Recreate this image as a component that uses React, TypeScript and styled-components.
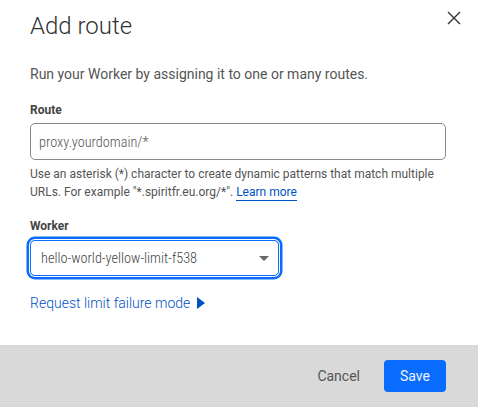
import React from "react";
import styled, { createGlobalStyle } from "styled-components";

const Global = createGlobalStyle`
  html, body { margin: 0; padding: 0; background: #fff; }
  body { font-family: Roboto, "Noto Sans", "Liberation Sans", sans-serif; -webkit-font-smoothing: antialiased; }
  * { box-sizing: border-box; }
`;

const Dialog = styled.div`
  width: 478px;
  height: 407px;
  display: flex;
  flex-direction: column;
  background: #fff;
`;

const Body = styled.div`
  flex: 1;
  display: flex;
  flex-direction: column;
  padding: 12px 30px 0 30px;
  position: relative;
`;

const Title = styled.h1`
  margin: 0;
  font-size: 24px;
  line-height: 28px;
  font-weight: 300;
  color: #333;
`;

const Close = styled.button`
  position: absolute;
  top: 10px;
  right: 16px;
  width: 16px;
  height: 16px;
  padding: 0;
  border: 0;
  background: none;
  display: flex;
  align-items: center;
  justify-content: center;
  cursor: pointer;
`;

const Description = styled.p`
  margin: 24px 0 0 0;
  font-size: 14px;
  line-height: 20px;
  color: #555;
`;

const Label = styled.label<{ $top: number }>`
  display: block;
  margin-top: ${(p) => p.$top}px;
  font-size: 12px;
  line-height: 16px;
  font-weight: 700;
  color: #444;
`;

const FieldValue = styled.div`
  display: flex;
  align-items: center;
  font-family: "Roboto Condensed", Roboto, sans-serif;
  font-size: 14.3px;
  font-weight: 300;
`;

const Input = styled(FieldValue)`
  margin-top: 5px;
  width: 416px;
  height: 37px;
  border: 1px solid #8a8a8a;
  border-radius: 5px;
  padding: 0 8px;
  color: #555;
`;

const Help = styled.p`
  margin: 5px 0 0 0;
  font-size: 12px;
  line-height: 18px;
  color: #555;
`;

const HelpLink = styled.a`
  display: inline-block;
  line-height: 15px;
  color: #0051c3;
  text-decoration: none;
  border-bottom: 1px solid #0051c3;
`;

const Select = styled(FieldValue)`
  margin-top: 6px;
  width: 249px;
  height: 36px;
  border: 1px solid #0a6cff;
  border-radius: 5px;
  box-shadow: 0 0 0 1px #fff, 0 0 0 3.5px #0a6cff;
  justify-content: space-between;
  padding: 0 9px 0 10px;
  color: #444;
`;

const Caret = styled.span`
  width: 0;
  height: 0;
  border-left: 5px solid transparent;
  border-right: 5px solid transparent;
  border-top: 5px solid #666;
`;

const Disclosure = styled.a`
  margin-top: 17px;
  display: flex;
  align-items: center;
  gap: 7px;
  font-size: 14px;
  line-height: 20px;
  font-weight: 300;
  color: #0051c3;
  text-decoration: none;
`;

const Footer = styled.div`
  height: 62px;
  background: #d9d9d9;
  display: flex;
  align-items: center;
  justify-content: flex-end;
  gap: 24px;
  padding: 0 32px 0 0;
`;

const Ghost = styled.button`
  border: 0;
  background: none;
  font-family: inherit;
  font-size: 14px;
  color: #555;
  padding: 0;
  cursor: pointer;
`;

const Primary = styled.button`
  width: 62px;
  height: 32px;
  border: 0;
  border-radius: 4px;
  background: #0a6cff;
  color: #eef3ff;
  font-family: inherit;
  font-size: 14px;
  cursor: pointer;
`;

export default function App() {
  return (
    <>
      <Global />
      <Dialog>
        <Body>
          <Title>Add route</Title>
          <Close aria-label="Close">
            <svg width="14" height="14" viewBox="0 0 14 14">
              <path d="M1 1 L13 13 M13 1 L1 13" stroke="#333" strokeWidth="1.4" />
            </svg>
          </Close>
          <Description>Run your Worker by assigning it to one or many routes.</Description>
          <Label $top={18}>Route</Label>
          <Input>proxy.yourdomain/*</Input>
          <Help>
            Use an asterisk (*) character to create dynamic patterns that match multiple URLs. For example
            "*.spiritfr.eu.org/*". <HelpLink href="#">Learn more</HelpLink>
          </Help>
          <Label $top={17}>Worker</Label>
          <Select>
            <span>hello-world-yellow-limit-f538</span>
            <Caret />
          </Select>
          <Disclosure href="#">
            Request limit failure mode
            <svg width="8" height="12" viewBox="0 0 8 12">
              <path d="M0 0 L8 6 L0 12 Z" fill="#0051c3" />
            </svg>
          </Disclosure>
        </Body>
        <Footer>
          <Ghost>Cancel</Ghost>
          <Primary>Save</Primary>
        </Footer>
      </Dialog>
    </>
  );
}
